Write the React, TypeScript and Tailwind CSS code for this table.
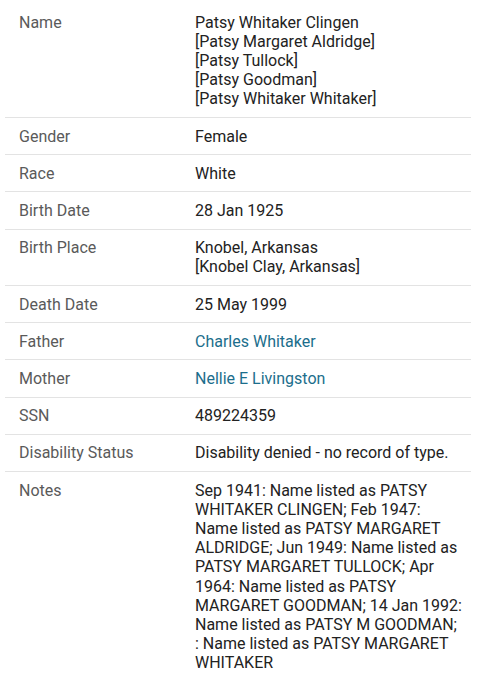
import React from "react";

type Row = { label: string; value: React.ReactNode; link?: boolean };

const lines = (ls: string[]) => (
  <>
    {ls.map((l, i) => (
      <div key={i} className="whitespace-nowrap">
        {l}
      </div>
    ))}
  </>
);

const rows: Row[] = [
  {
    label: "Name",
    value: lines([
      "Patsy Whitaker Clingen",
      "[Patsy Margaret Aldridge]",
      "[Patsy Tullock]",
      "[Patsy Goodman]",
      "[Patsy Whitaker Whitaker]",
    ]),
  },
  { label: "Gender", value: "Female" },
  { label: "Race", value: "White" },
  { label: "Birth Date", value: "28 Jan 1925" },
  {
    label: "Birth Place",
    value: lines(["Knobel, Arkansas", "[Knobel Clay, Arkansas]"]),
  },
  { label: "Death Date", value: "25 May 1999" },
  { label: "Father", value: "Charles Whitaker", link: true },
  { label: "Mother", value: "Nellie E Livingston", link: true },
  { label: "SSN", value: "489224359" },
  { label: "Disability Status", value: "Disability denied - no record of type." },
  {
    label: "Notes",
    value: lines([
      "Sep 1941: Name listed as PATSY",
      "WHITAKER CLINGEN; Feb 1947:",
      "Name listed as PATSY MARGARET",
      "ALDRIDGE; Jun 1949: Name listed as",
      "PATSY MARGARET TULLOCK; Apr",
      "1964: Name listed as PATSY",
      "MARGARET GOODMAN; 14 Jan 1992:",
      "Name listed as PATSY M GOODMAN;",
      ": Name listed as PATSY MARGARET",
      "WHITAKER",
    ]),
  },
];

export default function App() {
  return (
    <div
      className="bg-white w-[481px] h-[676px] overflow-hidden pt-[4px]"
      style={{ fontFamily: 'Roboto, "Liberation Sans", Arial, sans-serif' }}
    >
      <div className="ml-[5px] w-[466px]">
        {rows.map((r, i) => (
          <div
            key={r.label}
            className={`grid grid-cols-[176px_1fr] text-[16px] leading-[19.2px] py-[8.5px] ${
              i < rows.length - 1 ? "border-b border-[#e3e3e3]" : ""
            }`}
          >
            <div className="pl-[14px] text-[#5a5a5a]">{r.label}</div>
            <div
              className={`pl-[14px] ${
                r.link ? "text-[#1c6e8c]" : "text-[#222222]"
              }`}
            >
              {r.value}
            </div>
          </div>
        ))}
      </div>
    </div>
  );
}
